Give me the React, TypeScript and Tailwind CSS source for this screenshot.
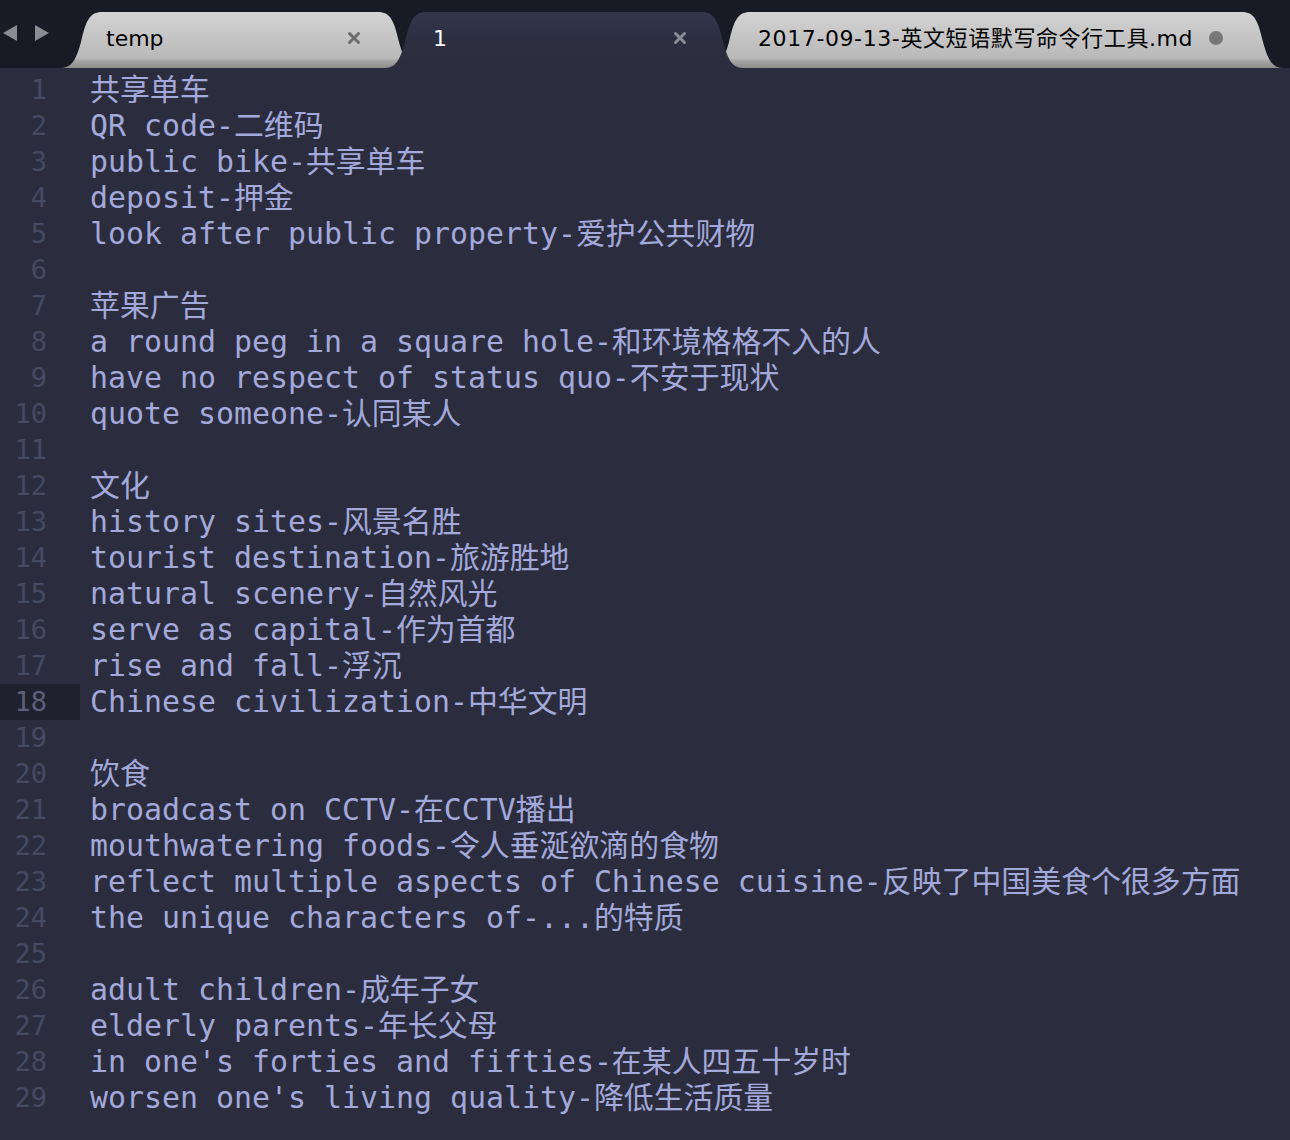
import React from 'react'

const lines: string[] = [
  '共享单车',
  'QR code-二维码',
  'public bike-共享单车',
  'deposit-押金',
  'look after public property-爱护公共财物',
  '',
  '苹果广告',
  'a round peg in a square hole-和环境格格不入的人',
  'have no respect of status quo-不安于现状',
  'quote someone-认同某人',
  '',
  '文化',
  'history sites-风景名胜',
  'tourist destination-旅游胜地',
  'natural scenery-自然风光',
  'serve as capital-作为首都',
  'rise and fall-浮沉',
  'Chinese civilization-中华文明',
  '',
  '饮食',
  'broadcast on CCTV-在CCTV播出',
  'mouthwatering foods-令人垂涎欲滴的食物',
  'reflect multiple aspects of Chinese cuisine-反映了中国美食个很多方面',
  'the unique characters of-...的特质',
  '',
  'adult children-成年子女',
  'elderly parents-年长父母',
  "in one's forties and fifties-在某人四五十岁时",
  "worsen one's living quality-降低生活质量",
]

const CURRENT_LINE = 18

// tab outline: sloped, rounded sides like Sublime's tabs
const TabShape = ({ width, active, id }: { width: number; active: boolean; id: string }) => {
  const w = width
  const d = `M0,56 C10,55 14,48 19,30 C24,8 28,0 40,0 L${w - 40},0 C${w - 28},0 ${w - 24},8 ${w - 19},30 C${w - 14},48 ${w - 10},55 ${w},56 Z`
  return (
    <svg className="absolute inset-0" width={w} height={56} viewBox={`0 0 ${w} 56`}>
      <defs>
        {active ? (
          <linearGradient id={id} x1="0" y1="0" x2="0" y2="1">
            <stop offset="0" stopColor="#33364b" />
            <stop offset="0.5" stopColor="#2d2f41" />
            <stop offset="1" stopColor="#2b2d3e" />
          </linearGradient>
        ) : (
          <linearGradient id={id} x1="0" y1="0" x2="0" y2="1">
            <stop offset="0" stopColor="#d3d3d3" />
            <stop offset="0.82" stopColor="#b9b9b9" />
            <stop offset="0.88" stopColor="#a3a3a3" />
            <stop offset="1" stopColor="#8c8c8c" />
          </linearGradient>
        )}
      </defs>
      <path d={d} fill={`url(#${id})`} />
    </svg>
  )
}

const CloseIcon = ({ color }: { color: string }) => (
  <svg width="14" height="14" viewBox="0 0 14 14">
    <path d="M2.5 2.5 L11.5 11.5 M11.5 2.5 L2.5 11.5" stroke={color} strokeWidth="3" strokeLinecap="round" />
  </svg>
)

const App: React.FC = () => {
  return (
    <div className="flex h-[1140px] w-[1290px] flex-col overflow-hidden bg-[#2b2d3e]">
      {/* Tab bar */}
      <div className="flex h-[68px] shrink-0 items-end bg-[#181a25]">
        <div className="flex h-full w-[62px] items-center gap-[16px] pl-[2px] pb-[2px]">
          <svg width="16" height="18" viewBox="0 0 16 18">
            <path d="M15 1 L1 9 L15 17 Z" fill="#8b8c93" />
          </svg>
          <svg width="16" height="18" viewBox="0 0 16 18">
            <path d="M1 1 L15 9 L1 17 Z" fill="#8b8c93" />
          </svg>
        </div>

        <div className="relative z-0 h-[56px] w-[356px]">
          <TabShape width={356} active={false} id="tab-temp" />
          <div className="relative flex h-full items-center pb-[4px] pl-[44px] pr-[57px] font-['DejaVu_Sans','Noto_Sans_CJK_SC',sans-serif] text-[22px] text-black">
            <span className="flex-1">temp</span>
            <CloseIcon color="#6d6d6d" />
          </div>
        </div>

        <div className="relative z-10 -ml-[32px] h-[56px] w-[356px]">
          <TabShape width={356} active id="tab-1" />
          <div className="relative flex h-full items-center pb-[4px] pl-[47px] pr-[55px] font-['DejaVu_Sans','Noto_Sans_CJK_SC',sans-serif] text-[22px] text-white">
            <span className="flex-1">1</span>
            <CloseIcon color="#8a8c98" />
          </div>
        </div>

        <div className="relative z-0 -ml-[32px] h-[56px] w-[572px]">
          <TabShape width={572} active={false} id="tab-md" />
          <div className="relative flex h-full items-center pb-[4px] pl-[48px] pr-[59px] font-['DejaVu_Sans','Noto_Sans_CJK_SC',sans-serif] text-[22px] tracking-[0.6px] text-black">
            <span className="flex-1 whitespace-nowrap">2017-09-13-英文短语默写命令行工具.md</span>
            <span className="h-[14px] w-[14px] rounded-full bg-[#777777]" />
          </div>
        </div>
      </div>

      {/* Editor */}
      <div className="flex-1 pt-[4px] font-['DejaVu_Sans_Mono','Noto_Sans_CJK_SC',monospace]">
        {lines.map((text, i) => {
          const n = i + 1
          const current = n === CURRENT_LINE
          return (
            <div key={n} className="flex h-[36px] items-center">
              <div
                className={`flex h-full w-[80px] shrink-0 items-center justify-end pr-[33px] text-[27px] ${
                  current ? 'bg-[#1f212f] text-[#5c6079]' : 'text-[#454a62]'
                }`}
              >
                {n}
              </div>
              <div className="whitespace-pre pl-[10px] text-[29.9px] leading-[36px] text-[#a3a9da]">{text}</div>
            </div>
          )
        })}
      </div>
    </div>
  )
}

export default App
